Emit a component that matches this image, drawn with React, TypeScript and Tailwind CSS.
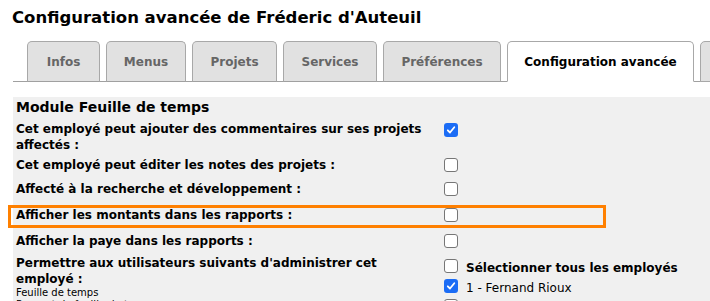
import React from "react";

function Box({ checked = false }: { checked?: boolean }) {
  return checked ? (
    <span className="inline-flex h-[14px] w-[14px] shrink-0 items-center justify-center rounded-[3px] bg-[#1b6cf5]">
      <svg width="10" height="10" viewBox="0 0 10 10">
        <path d="M1.8 5.3 L4 7.5 L8.3 2.3" fill="none" stroke="white" strokeWidth="1.8" strokeLinecap="round" strokeLinejoin="round" />
      </svg>
    </span>
  ) : (
    <span className="inline-block h-[14px] w-[14px] shrink-0 rounded-[3px] border border-[#767676] bg-white" />
  );
}

const tabs = [
  { label: "Infos", w: "w-[73px]" },
  { label: "Menus", w: "w-[80px]" },
  { label: "Projets", w: "w-[85px]" },
  { label: "Services", w: "w-[94px]" },
  { label: "Préférences", w: "w-[118px]" },
];

export default function App() {
  return (
    <div className="h-[301px] w-[710px] overflow-hidden bg-white text-black [font-family:'DejaVu_Sans',Verdana,sans-serif]">
      <h1 className="pl-[12px] pt-[8px] text-[16.5px] font-bold leading-[20px]">
        Configuration avancée de Fréderic d'Auteuil
      </h1>
      <div className="ml-[13px] mt-[13px] flex items-end gap-[6px] border-b border-[#a0a0a0] pl-[14px]">
        {tabs.map((t) => (
          <div
            key={t.label}
            className={`${t.w} mb-[-1px] flex h-[41px] shrink-0 items-center justify-center rounded-t-[5px] border border-[#a8a8a8] border-b-[#a0a0a0] bg-[#e1e1e1] text-[12px] font-bold text-[#666]`}
          >
            {t.label}
          </div>
        ))}
        <div className="mb-[-1px] flex h-[41px] w-[187px] shrink-0 items-center justify-center rounded-t-[5px] border border-[#a8a8a8] border-b-white bg-white text-[12px] font-bold text-black">
          Configuration avancée
        </div>
        <div className="mb-[-1px] h-[41px] w-[40px] shrink-0 rounded-t-[5px] border border-[#a8a8a8] bg-[#e1e1e1]" />
      </div>
      <div className="ml-[13px] mt-[15px] h-[300px] bg-[#f0f0f0] pl-[3px] pt-[1px]">
        <div className="text-[14px] font-bold leading-[18px]">Module Feuille de temps</div>
        <div className="text-[12px] font-bold leading-[16px]">
          <div className="mt-[5px] flex">
            <div className="w-[428px] pr-[8px]">
              Cet employé peut ajouter des commentaires sur ses projets affectés :
            </div>
            <div className="pt-[2px]"><Box checked /></div>
          </div>
          <div className="mt-[4px] flex items-center">
            <div className="w-[428px]">Cet employé peut éditer les notes des projets :</div>
            <Box />
          </div>
          <div className="mt-[8px] flex items-center">
            <div className="w-[428px]">Affecté à la recherche et développement :</div>
            <Box />
          </div>
          <div className="relative mt-[10px] flex items-center">
            <span className="absolute left-[-8px] top-[-2px] h-[23px] w-[598px] border-[3px] border-[#ff8000]" />
            <div className="w-[428px]">Afficher les montants dans les rapports :</div>
            <Box />
          </div>
          <div className="mt-[10px] flex items-center">
            <div className="w-[428px]">Afficher la paye dans les rapports :</div>
            <Box />
          </div>
          <div className="mt-[6px] flex">
            <div className="w-[428px]">
              <div className="w-[380px]">Permettre aux utilisateurs suivants d'administrer cet employé :</div>
              <div className="text-[10px] font-normal leading-[12px]">Feuille de temps</div>
              <div className="text-[10px] font-normal leading-[12px]">Rapport de feuille de temps</div>
            </div>
            <div className="flex flex-col gap-[3px] pt-[4px]">
              <div className="flex items-start gap-[8px]">
                <Box />
                <span className="mt-[1px]">Sélectionner tous les employés</span>
              </div>
              <div className="flex items-start gap-[8px] font-normal">
                <Box checked />
                <span className="mt-[1px]">1 - Fernand Rioux</span>
              </div>
              <div className="flex items-start gap-[8px] font-normal">
                <Box />
                <span className="mt-[1px]">2 - Employé</span>
              </div>
            </div>
          </div>
        </div>
      </div>
    </div>
  );
}
